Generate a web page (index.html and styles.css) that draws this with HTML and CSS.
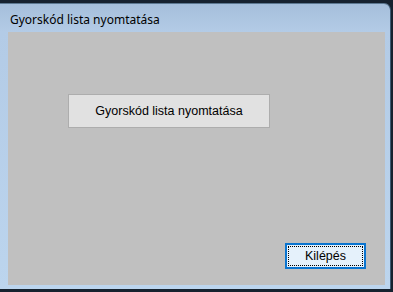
FILE: index.html
```html
<!DOCTYPE html>
<html lang="hu">

<head>
    <meta charset="UTF-8">
    <meta name="viewport" content="width=device-width, initial-scale=1.0">
    <title>Gyorskód lista nyomtatása</title>
    <link rel="stylesheet" href="styles.css">
</head>

<body>

    <div class="window">
        <div class="title-bar">Gyorskód lista nyomtatása</div>
        <div class="client">
            <button class="btn btn-print">Gyorskód lista nyomtatása</button>
            <button class="btn btn-exit"><span class="focus">Kilépés</span></button>
        </div>
    </div>

</body>

</html>
```

FILE: styles.css
```css
html, body {
    margin: 0;
    height: 100%;
}

body {
    background-color: #16222f;
    font-family: 'Noto Sans', 'DejaVu Sans', sans-serif;
    overflow: hidden;
}

.window {
    margin-top: 3px;
    width: 391px;
    height: 286px;
    box-sizing: border-box;
    background: linear-gradient(to bottom, #a5bfdb 0px, #b3cbe6 28px, #bcd5ee 100%);
    border-top-right-radius: 7px;
    border-right: 1px solid #3d5a73;
    border-top: 1px solid #5c7891;
    display: flex;
    flex-direction: column;
    padding: 0 5px 4px 8px;
}

.title-bar {
    height: 28px;
    line-height: 31px;
    font-size: 12px;
    color: #000;
    padding-left: 2px;
    flex: none;
}

.client {
    flex: 1;
    background-color: #c0c0c0;
    display: flex;
    flex-direction: column;
    align-items: flex-start;
    padding: 62px 19px 16px 60px;
}

.btn {
    font-family: 'Liberation Sans', Arial, sans-serif;
    font-size: 12.5px;
    color: #000;
    background-color: #e1e1e1;
    border: 1px solid #adadad;
    padding: 0;
    margin: 0;
}

.btn-print {
    width: 202px;
    height: 34px;
}

.btn-exit {
    margin-top: auto;
    align-self: flex-end;
    width: 81px;
    height: 26px;
    border: 2px solid #0a74cf;
    background-color: #e5f1fb;
    padding: 1px;
}

.btn-exit .focus {
    display: block;
    height: 100%;
    box-sizing: border-box;
    border: 1px dotted #000;
    line-height: 18px;
}
```
